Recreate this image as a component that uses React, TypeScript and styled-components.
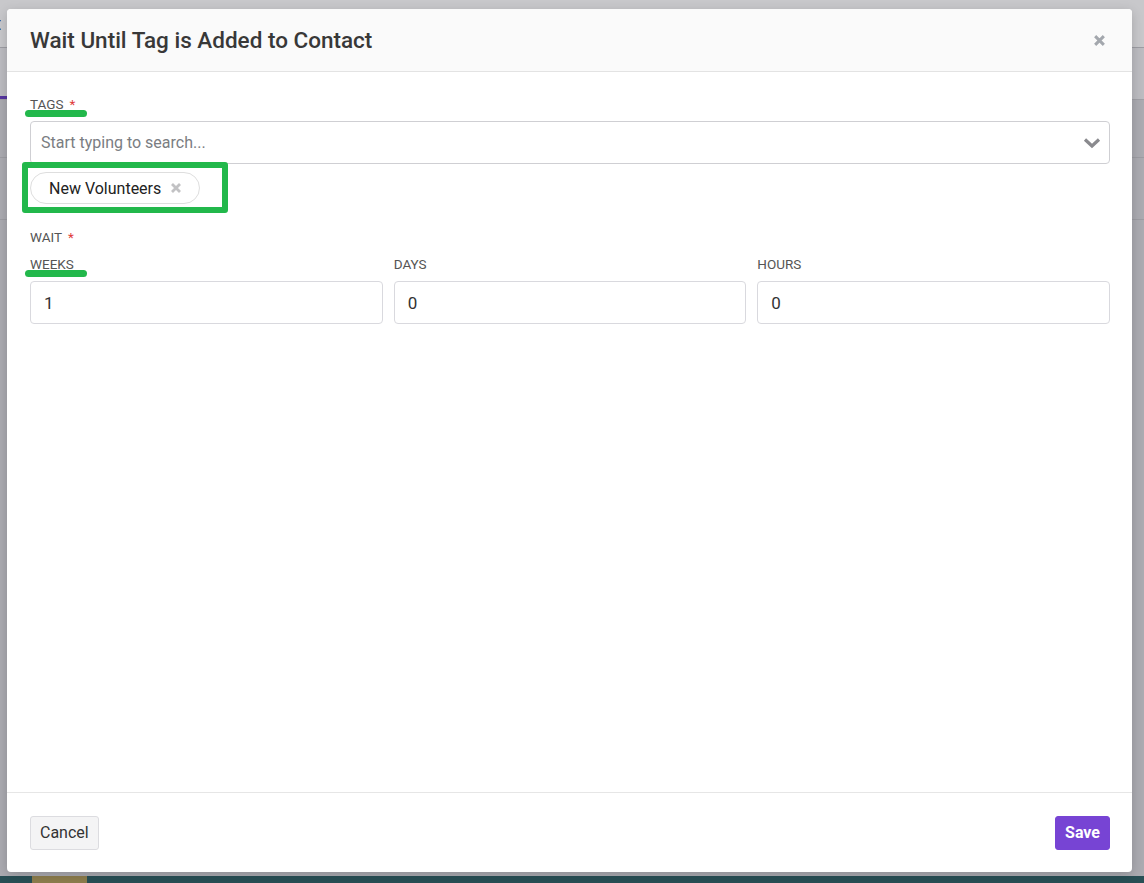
import styled, { createGlobalStyle } from 'styled-components';

const GlobalStyle = createGlobalStyle`
  html, body {
    margin: 0;
    padding: 0;
    height: 100%;
    overflow: hidden;
  }
  body {
    font-family: Roboto, "Liberation Sans", Arial, sans-serif;
    color: #333;
  }
  * {
    box-sizing: border-box;
  }
`;

/* page underneath the dialog */

const Page = styled.div`
  position: fixed;
  inset: 0;
  display: flex;
  flex-direction: column;
  background: #d6d6da;
`;

const TopBar = styled.div`
  height: 48px;
  flex-shrink: 0;
  background: #fbfbfb;
  border-bottom: 1px solid #c4c4c8;
  display: flex;
  align-items: center;
  font-size: 18px;
  color: #222;
  overflow: hidden;
`;

const PageTitle = styled.span`
  margin-left: -62px;
`;

const TabBar = styled.div`
  height: 52px;
  flex-shrink: 0;
  background: #ececef;
  display: flex;
  align-items: flex-end;
  border-bottom: 1px solid #c8c8cc;
`;

const Tab = styled.div<{ $active?: boolean }>`
  padding: 0 0 12px;
  width: 60px;
  margin-left: -40px;
  font-size: 16px;
  color: #222;
  border-bottom: 3px solid ${(p) => (p.$active ? '#6a3fc4' : 'transparent')};
`;

const Row = styled.div<{ $h: number }>`
  height: ${(p) => p.$h}px;
  flex-shrink: 0;
  border-bottom: 1px solid #c4c4c8;
`;

const Filler = styled.div`
  flex: 1;
`;

const BottomBar = styled.div`
  height: 7px;
  flex-shrink: 0;
  background: #2f6064;
  display: flex;
`;

const BottomTab = styled.div`
  width: 55px;
  margin-left: 32px;
  background: #b09b5a;
`;

const Backdrop = styled.div`
  position: fixed;
  inset: 0;
  background: rgba(20, 20, 30, 0.22);
`;

/* dialog */

const Modal = styled.div`
  position: fixed;
  top: 9px;
  left: 7px;
  width: 1125px;
  height: 863px;
  background: #fff;
  border-radius: 4px;
  box-shadow: 0 3px 12px rgba(0, 0, 0, 0.18);
  display: flex;
  flex-direction: column;
  overflow: hidden;
`;

const Header = styled.div`
  height: 63px;
  flex-shrink: 0;
  background: #fafafa;
  border-bottom: 1px solid #e3e3e3;
  display: flex;
  align-items: center;
  justify-content: space-between;
  padding: 0 26px 0 23px;
`;

const Title = styled.h4`
  margin: 0;
  font-size: 22.5px;
  font-weight: 500;
  color: #383838;
`;

const CloseButton = styled.button`
  border: 0;
  background: none;
  padding: 0;
  display: flex;
  cursor: pointer;
`;

const Body = styled.div`
  flex: 1;
  padding: 24px 22px 0 23px;
`;

const Label = styled.div<{ $mark?: number; $gap?: number }>`
  position: relative;
  font-size: 13.5px;
  font-weight: 400;
  color: #555;
  text-transform: uppercase;
  line-height: 16px;
  margin-bottom: ${(p) => p.$gap ?? 9}px;

  ${(p) =>
    p.$mark &&
    `&::after {
      content: '';
      position: absolute;
      left: -5px;
      top: 14px;
      width: ${p.$mark}px;
      height: 7px;
      border-radius: 4px;
      background: #22b84b;
    }`}
`;

const Required = styled.span`
  color: #e03b3b;
  margin-left: 6px;
`;

const Select = styled.div`
  height: 43px;
  border: 1px solid #cfcfd3;
  border-radius: 4px;
  display: flex;
  align-items: center;
  justify-content: space-between;
  padding: 0 8px 0 10px;
  font-size: 16px;
  color: #7a7d82;
`;

const Highlight = styled.div`
  display: inline-flex;
  margin: -2px 0 0 -8px;
  border: 6px solid #22b84b;
  border-radius: 3px;
  padding: 4px 22px 3px 2px;
`;

const Chip = styled.div`
  height: 32px;
  width: 170px;
  border: 1px solid #dedede;
  border-radius: 16px;
  display: flex;
  align-items: center;
  gap: 9px;
  padding-left: 18px;
  font-size: 16px;
  color: #222;
`;

const WaitSection = styled.div`
  margin-top: 16px;
`;

const Fields = styled.div`
  display: grid;
  grid-template-columns: repeat(3, 1fr);
  gap: 11px;
`;

const Field = styled.div`
  display: flex;
  flex-direction: column;
`;

const Input = styled.input`
  height: 43px;
  border: 1px solid #d9d9de;
  border-radius: 4px;
  padding: 0 13px;
  font-family: inherit;
  font-size: 17px;
  color: #333;
  outline: none;
  width: 100%;
`;

const Footer = styled.div`
  height: 80px;
  flex-shrink: 0;
  border-top: 1px solid #e6e6e6;
  display: flex;
  align-items: center;
  justify-content: space-between;
  padding: 0 22px 0 23px;
`;

const Button = styled.button<{ $primary?: boolean }>`
  height: 34px;
  padding: 0 9px;
  border-radius: 3px;
  font-family: inherit;
  font-size: 16px;
  cursor: pointer;
  border: 1px solid ${(p) => (p.$primary ? '#7744d4' : '#dcdce0')};
  background: ${(p) => (p.$primary ? '#7744d4' : '#f4f4f5')};
  color: ${(p) => (p.$primary ? '#fff' : '#333')};
  font-weight: ${(p) => (p.$primary ? 700 : 400)};
`;

const CrossIcon = ({ size, color }: { size: number; color: string }) => (
  <svg width={size} height={size} viewBox="0 0 12 12">
    <path d="M2 2 L10 10 M10 2 L2 10" stroke={color} strokeWidth="2.8" strokeLinecap="butt" />
  </svg>
);

const ChevronDown = () => (
  <svg width="18" height="12" viewBox="0 0 18 12">
    <path d="M2 2.5 L9 9 L16 2.5" fill="none" stroke="#8a8a8e" strokeWidth="3.2" />
  </svg>
);

const waitFields = [
  { label: 'Weeks', value: '1', mark: 62 },
  { label: 'Days', value: '0' },
  { label: 'Hours', value: '0' },
];

export default function App() {
  return (
    <>
      <GlobalStyle />
      <Page>
        <TopBar>
          <PageTitle>Content</PageTitle>
        </TopBar>
        <TabBar>
          <Tab $active>Flow</Tab>
        </TabBar>
        <Row $h={58} />
        <Row $h={62} />
        <Filler />
        <BottomBar>
          <BottomTab />
        </BottomBar>
      </Page>
      <Backdrop />

      <Modal>
        <Header>
          <Title>Wait Until Tag is Added to Contact</Title>
          <CloseButton aria-label="Close">
            <CrossIcon size={13} color="#a3a7ad" />
          </CloseButton>
        </Header>

        <Body>
          <Label $mark={62}>
            Tags<Required>*</Required>
          </Label>
          <Select>
            <span>Start typing to search...</span>
            <ChevronDown />
          </Select>
          <Highlight>
            <Chip>
              New Volunteers
              <CrossIcon size={12} color="#c2c2c4" />
            </Chip>
          </Highlight>

          <WaitSection>
            <Label $gap={11}>
              Wait<Required>*</Required>
            </Label>
            <Fields>
              {waitFields.map((f) => (
                <Field key={f.label}>
                  <Label $mark={f.mark}>{f.label}</Label>
                  <Input defaultValue={f.value} />
                </Field>
              ))}
            </Fields>
          </WaitSection>
        </Body>

        <Footer>
          <Button>Cancel</Button>
          <Button $primary>Save</Button>
        </Footer>
      </Modal>
    </>
  );
}
